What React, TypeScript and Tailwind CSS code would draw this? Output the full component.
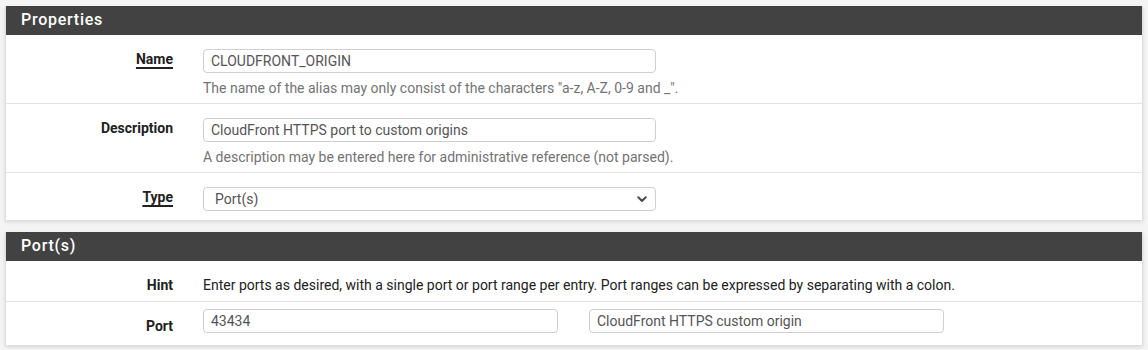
import React from "react";

const font = { fontFamily: "Roboto, 'Liberation Sans', sans-serif" };

function Label({ children, underline }: { children: React.ReactNode; underline?: boolean }) {
  return (
    <div className="w-[167px] shrink-0 text-right text-[14px] leading-[20px] font-bold text-[#212121]">
      <span className={underline ? "underline decoration-[2px] underline-offset-[3px]" : ""}>{children}</span>
    </div>
  );
}

function TextInput({ value, w }: { value: string; w: string }) {
  return (
    <div className={`${w} h-[24px] border border-[#cfcfcf] rounded-[4px] bg-white px-[7px] text-[14px] leading-[22px] text-[#555]`}>
      {value}
    </div>
  );
}

export default function App() {
  return (
    <div style={font} className="w-[1148px] h-[350px] bg-[#f4f4f4] pt-[6px] px-[5px] overflow-hidden">
      {/* Properties panel */}
      <div className="w-[1138px] bg-white border-x border-[#dedede] shadow-[0_2px_4px_rgba(0,0,0,0.12)]">
        <div className="h-[29px] bg-[#424242] text-white pl-[15px] text-[16px] font-medium tracking-[0.75px] leading-[27px]">
          Properties
        </div>
        <div className="flex gap-[30px] pt-[14px] pb-[5px] border-b border-[#e2e2e2]">
          <Label underline>Name</Label>
          <div>
            <TextInput value="CLOUDFRONT_ORIGIN" w="w-[453px]" />
            <div className="mt-[5px] text-[14px] leading-[20px] text-[#737373]">
              The name of the alias may only consist of the characters "a-z, A-Z, 0-9 and _".
            </div>
          </div>
        </div>
        <div className="flex gap-[30px] pt-[14px] pb-[5px] border-b border-[#e2e2e2]">
          <Label>Description</Label>
          <div>
            <TextInput value="CloudFront HTTPS port to custom origins" w="w-[453px]" />
            <div className="mt-[5px] text-[14px] leading-[20px] text-[#737373]">
              A description may be entered here for administrative reference (not parsed).
            </div>
          </div>
        </div>
        <div className="flex gap-[30px] pt-[14px] pb-[9px]">
          <Label underline>Type</Label>
          <div className="w-[453px] h-[24px] border border-[#cfcfcf] rounded-[4px] bg-white pl-[11px] pr-[4px] flex items-center justify-between text-[14px] text-[#555]">
            <span className="leading-[22px]">Port(s)</span>
            <svg width="10" height="7" viewBox="0 0 10 7" className="mr-[4px]">
              <path d="M1.3 1.3 L5 5 L8.7 1.3" fill="none" stroke="#4a4a4a" strokeWidth="2" strokeLinecap="round" strokeLinejoin="round" />
            </svg>
          </div>
        </div>
      </div>

      {/* Port(s) panel */}
      <div className="mt-[12px] w-[1138px] bg-white border-x border-[#dedede] shadow-[0_2px_4px_rgba(0,0,0,0.12)]">
        <div className="h-[29px] bg-[#424242] text-white pl-[15px] text-[16px] font-medium tracking-[0.75px] leading-[27px]">
          Port(s)
        </div>
        <div className="flex gap-[30px] pt-[14px] pb-[6px] border-b border-[#e2e2e2]">
          <Label>Hint</Label>
          <div className="text-[14px] leading-[20px] text-[#212121]">
            Enter ports as desired, with a single port or port range per entry. Port ranges can be expressed by separating with a colon.
          </div>
        </div>
        <div className="flex gap-[30px] pt-[7px] pb-[9px]">
          <div className="pt-[7px]">
            <Label>Port</Label>
          </div>
          <div className="flex gap-[31px]">
            <TextInput value="43434" w="w-[355px]" />
            <TextInput value="CloudFront HTTPS custom origin" w="w-[355px]" />
          </div>
        </div>
      </div>
    </div>
  );
}
